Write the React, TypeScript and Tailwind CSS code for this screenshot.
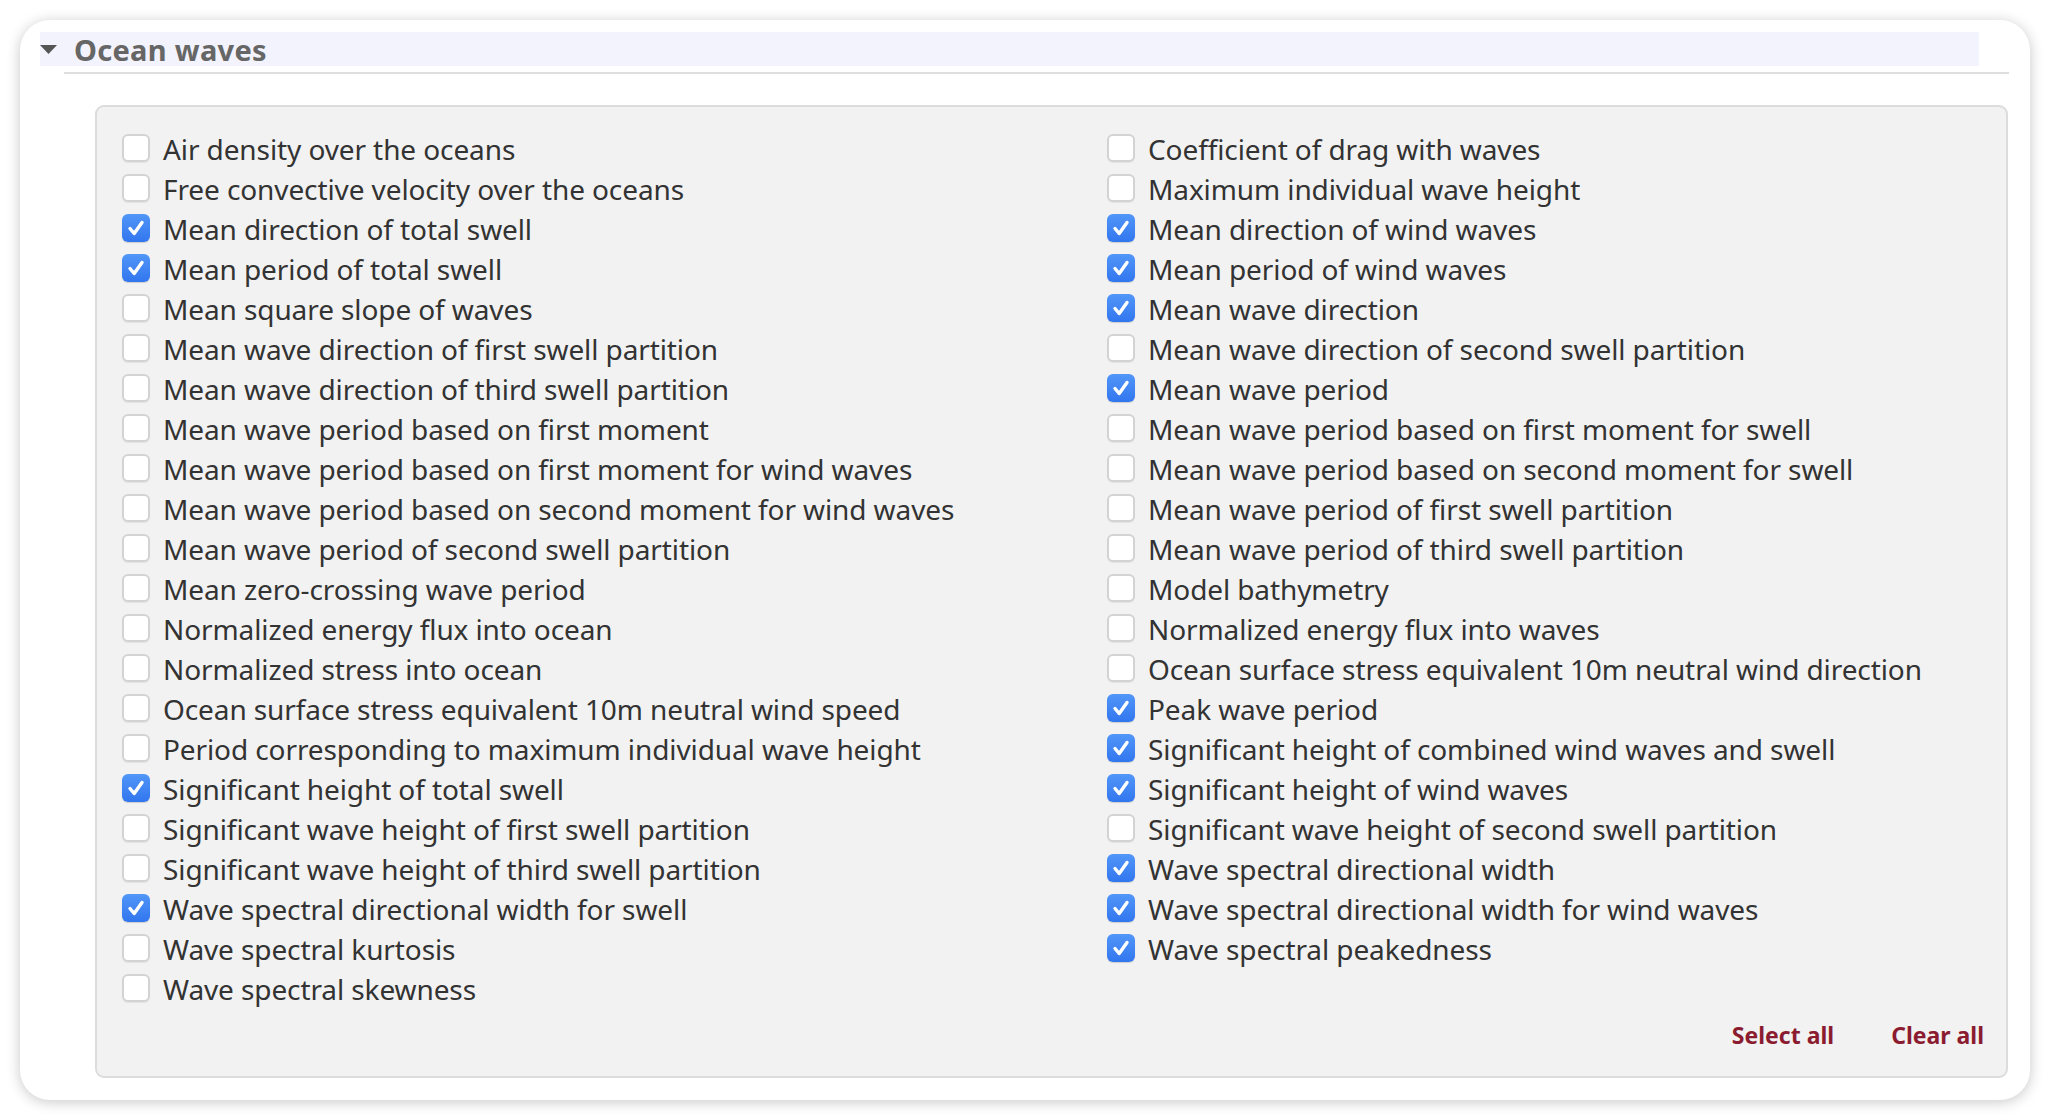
import { useState } from "react";

const leftItems: [string, boolean][] = [
  ["Air density over the oceans", false],
  ["Free convective velocity over the oceans", false],
  ["Mean direction of total swell", true],
  ["Mean period of total swell", true],
  ["Mean square slope of waves", false],
  ["Mean wave direction of first swell partition", false],
  ["Mean wave direction of third swell partition", false],
  ["Mean wave period based on first moment", false],
  ["Mean wave period based on first moment for wind waves", false],
  ["Mean wave period based on second moment for wind waves", false],
  ["Mean wave period of second swell partition", false],
  ["Mean zero-crossing wave period", false],
  ["Normalized energy flux into ocean", false],
  ["Normalized stress into ocean", false],
  ["Ocean surface stress equivalent 10m neutral wind speed", false],
  ["Period corresponding to maximum individual wave height", false],
  ["Significant height of total swell", true],
  ["Significant wave height of first swell partition", false],
  ["Significant wave height of third swell partition", false],
  ["Wave spectral directional width for swell", true],
  ["Wave spectral kurtosis", false],
  ["Wave spectral skewness", false],
];

const rightItems: [string, boolean][] = [
  ["Coefficient of drag with waves", false],
  ["Maximum individual wave height", false],
  ["Mean direction of wind waves", true],
  ["Mean period of wind waves", true],
  ["Mean wave direction", true],
  ["Mean wave direction of second swell partition", false],
  ["Mean wave period", true],
  ["Mean wave period based on first moment for swell", false],
  ["Mean wave period based on second moment for swell", false],
  ["Mean wave period of first swell partition", false],
  ["Mean wave period of third swell partition", false],
  ["Model bathymetry", false],
  ["Normalized energy flux into waves", false],
  ["Ocean surface stress equivalent 10m neutral wind direction", false],
  ["Peak wave period", true],
  ["Significant height of combined wind waves and swell", true],
  ["Significant height of wind waves", true],
  ["Significant wave height of second swell partition", false],
  ["Wave spectral directional width", true],
  ["Wave spectral directional width for wind waves", true],
  ["Wave spectral peakedness", true],
];

function CheckRow({ label, initial }: { label: string; initial: boolean }) {
  const [checked, setChecked] = useState(initial);
  return (
    <label className="flex h-[40px] cursor-pointer items-center gap-[13px]">
      <button
        type="button"
        onClick={() => setChecked((c) => !c)}
        className={
          checked
            ? "flex h-[28px] w-[28px] shrink-0 items-center justify-center rounded-[6px] bg-gradient-to-b from-[#5196f8] to-[#3276ef] shadow-[0_1px_1px_rgba(0,0,0,0.15)]"
            : "h-[28px] w-[28px] shrink-0 rounded-[6px] border-2 border-[#d3d3d3] bg-white shadow-[0_1px_1px_rgba(0,0,0,0.06)]"
        }
      >
        {checked ? (
          <svg width="22" height="22" viewBox="0 0 22 22" fill="none">
            <path
              d="M5 11.5 L9.2 16.5 L17 5.5"
              stroke="white"
              strokeWidth="3.4"
              strokeLinecap="round"
              strokeLinejoin="round"
            />
          </svg>
        ) : null}
      </button>
      <span className="mt-[2px] whitespace-nowrap text-[28px] leading-none tracking-[-0.1px] text-[#333]">
        {label}
      </span>
    </label>
  );
}

export default function App() {
  return (
    <div className="min-h-screen bg-white p-[20px] font-['Noto_Sans',sans-serif]">
      <div className="h-[1080px] w-[2010px] rounded-[30px] bg-white px-[20px] pt-[12px] shadow-[0_2px_14px_rgba(0,0,0,0.22)]">
        <div className="flex h-[34px] w-[1939px] items-center bg-[#f3f3fd]">
          <svg width="17" height="10" viewBox="0 0 17 10" className="mt-[1px]">
            <polygon points="0,0 17,0 8.5,9" fill="#555" />
          </svg>
          <h2 className="ml-[17px] text-[29px] font-bold leading-none tracking-[0.3px] text-[#666]">
            Ocean waves
          </h2>
        </div>
        <div className="ml-[24px] mt-[6px] h-[2px] w-[1945px] bg-[#dedede]" />

        <div className="ml-[55px] mt-[31px] h-[973px] w-[1913px] rounded-[9px] border-2 border-[#dcdcdc] bg-[#f2f2f2] pl-[25px] pr-[21px] pt-[21px]">
          <div className="grid grid-cols-[985px_1fr]">
            <div className="flex flex-col">
              {leftItems.map(([label, c]) => (
                <CheckRow key={label} label={label} initial={c} />
              ))}
            </div>
            <div className="flex flex-col">
              {rightItems.map(([label, c]) => (
                <CheckRow key={label} label={label} initial={c} />
              ))}
            </div>
          </div>
          <div className="mt-[10px] flex justify-end gap-[57px] pr-[1px]">
            <a href="#" className="text-[23px] font-bold text-[#8b1c30]">
              Select all
            </a>
            <a href="#" className="text-[23px] font-bold text-[#8b1c30]">
              Clear all
            </a>
          </div>
        </div>
      </div>
    </div>
  );
}
